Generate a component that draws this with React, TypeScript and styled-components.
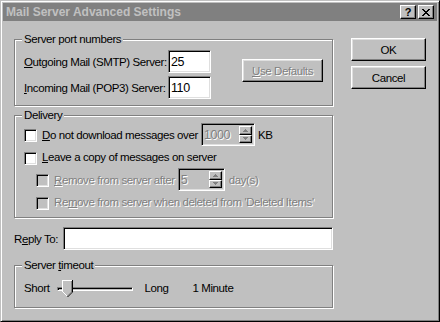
import styled, { createGlobalStyle } from 'styled-components';

const FACE = '#c0c0c0';
const SHADOW = '#808080';
const LIGHT = '#dfdfdf';
const FONT = `"Liberation Sans", Arial, sans-serif`;

const GlobalStyle = createGlobalStyle`
  html, body {
    margin: 0;
    padding: 0;
    background: ${FACE};
  }
  body {
    font-family: ${FONT};
    font-size: 11.5px;
    letter-spacing: -0.4px;
    color: #000;
  }
`;

const Window = styled.div`
  box-sizing: border-box;
  width: 440px;
  height: 322px;
  padding: 2px;
  display: flex;
  flex-direction: column;
  background: ${FACE};
  border: 1px solid;
  border-color: ${FACE} #000 #000 ${FACE};
  box-shadow: inset 1px 1px 0 #fff, inset -1px -1px 0 ${SHADOW};
`;

const TitleBar = styled.div`
  display: flex;
  align-items: center;
  height: 18px;
  padding: 0 3px 0 3px;
  background: ${SHADOW};
`;

const Title = styled.span`
  flex: 1;
  font-weight: 700;
  font-size: 12px;
  letter-spacing: 0;
  color: ${FACE};
  white-space: nowrap;
`;

const TitleButton = styled.div`
  box-sizing: border-box;
  display: flex;
  align-items: center;
  justify-content: center;
  width: 16px;
  height: 14px;
  margin-left: 2px;
  background: ${FACE};
  border: 1px solid;
  border-color: #fff #000 #000 #fff;
  box-shadow: inset -1px -1px 0 ${SHADOW};
  font-weight: 700;
  font-size: 11px;
  letter-spacing: 0;
  line-height: 1;
`;

const Body = styled.div`
  display: flex;
  padding: 17px 0 0 11px;
`;

const Main = styled.div`
  display: flex;
  flex-direction: column;
  width: 320px;
  padding-top: 1px;
`;

const Side = styled.div`
  display: flex;
  flex-direction: column;
  gap: 5px;
  margin-left: 17px;
`;

const Group = styled.div<{ $height: number; $top?: number }>`
  position: relative;
  box-sizing: border-box;
  width: 319px;
  height: ${(p) => p.$height}px;
  margin-top: ${(p) => p.$top ?? 0}px;
  border: 1px solid ${SHADOW};
  box-shadow: 1px 1px 0 #fff, inset 1px 1px 0 #fff;
`;

const Legend = styled.span`
  position: absolute;
  top: -8px;
  left: 7px;
  padding: 0 2px;
  line-height: 15px;
  background: ${FACE};
  white-space: nowrap;
`;

const GroupInner = styled.div<{ $pad: string }>`
  padding: ${(p) => p.$pad};
`;

const PortLayout = styled.div`
  display: flex;
  align-items: flex-start;
`;

const PortGrid = styled.div`
  display: grid;
  grid-template-columns: 144px 43px;
  row-gap: 3px;
  align-items: center;
`;

const Text = styled.span<{ $disabled?: boolean }>`
  white-space: nowrap;
  color: ${(p) => (p.$disabled ? SHADOW : '#000')};
  text-shadow: ${(p) => (p.$disabled ? '1px 1px 0 #fff' : 'none')};
`;

const TextBox = styled.div<{ $width: number; $disabled?: boolean }>`
  box-sizing: border-box;
  display: flex;
  align-items: center;
  width: ${(p) => p.$width}px;
  height: 23px;
  padding-left: 2px;
  font-size: 12.5px;
  background: ${(p) => (p.$disabled ? FACE : '#fff')};
  border: 1px solid;
  border-color: ${SHADOW} #fff #fff ${SHADOW};
  box-shadow: inset 1px 1px 0 #000, inset -1px -1px 0 ${LIGHT};
`;

const Button = styled.div<{ $width?: number; $disabled?: boolean }>`
  box-sizing: border-box;
  display: flex;
  align-items: center;
  justify-content: center;
  width: ${(p) => p.$width ?? 75}px;
  height: 23px;
  background: ${FACE};
  border: 1px solid;
  border-color: #fff #000 #000 #fff;
  box-shadow: inset -1px -1px 0 ${SHADOW}, inset 1px 1px 0 ${LIGHT};
  color: ${(p) => (p.$disabled ? SHADOW : '#000')};
  text-shadow: ${(p) => (p.$disabled ? '1px 1px 0 #fff' : 'none')};
`;

const DefaultsButton = styled(Button)`
  margin: 9px 0 0 31px;
`;

const CheckRow = styled.div<{ $height: number; $indent?: number }>`
  display: flex;
  align-items: center;
  height: ${(p) => p.$height}px;
  padding-left: ${(p) => p.$indent ?? 0}px;
`;

const CheckBox = styled.div<{ $disabled?: boolean }>`
  box-sizing: border-box;
  flex: none;
  width: 13px;
  height: 13px;
  margin: 2px 5px 0 0;
  background: ${(p) => (p.$disabled ? FACE : '#fff')};
  border: 1px solid;
  border-color: ${SHADOW} #fff #fff ${SHADOW};
  box-shadow: inset 1px 1px 0 #000, inset -1px -1px 0 ${LIGHT};
`;

const SpinBox = styled(TextBox)<{ $gap: number }>`
  margin-left: ${(p) => p.$gap}px;
  padding-right: 2px;
  color: ${SHADOW};
  text-shadow: 1px 1px 0 #fff;
`;

const SpinValue = styled.span`
  flex: 1;
`;

const SpinButtons = styled.div`
  display: flex;
  flex-direction: column;
  align-self: stretch;
  padding: 2px 0;
`;

const SpinButton = styled.div`
  box-sizing: border-box;
  flex: 1;
  display: flex;
  align-items: center;
  justify-content: center;
  width: 13px;
  background: ${FACE};
  border: 1px solid;
  border-color: #fff #000 #000 #fff;
  box-shadow: inset -1px -1px 0 ${SHADOW};
`;

const After = styled(Text)<{ $gap: number }>`
  margin-left: ${(p) => p.$gap}px;
`;

const ReplyRow = styled.div`
  display: flex;
  align-items: center;
  justify-content: space-between;
  width: 319px;
  margin-top: 9px;
`;

const TimeoutRow = styled.div`
  display: flex;
  align-items: center;
  height: 22px;
`;

const Slider = styled.div`
  position: relative;
  display: flex;
  align-items: center;
  width: 80px;
  height: 22px;
  margin: 0 10px 0 5px;
`;

const Track = styled.div`
  box-sizing: border-box;
  flex: 1;
  height: 4px;
  margin: 1px 2px 0;
  border: 1px solid;
  border-color: ${SHADOW} #fff #fff ${SHADOW};
  box-shadow: inset 1px 1px 0 #000;
`;

const Thumb = styled.svg`
  position: absolute;
  left: 7px;
  top: 3px;
`;

const U = styled.span`
  text-decoration: underline;
`;

const Arrow = ({ up }: { up?: boolean }) => (
  <svg width="5" height="3" viewBox="0 0 5 3">
    <path d={up ? 'M2 0h1v1h1v1h1v1H0V2h1V1h1z' : 'M0 0h5v1H4v1H3v1H2V2H1V1H0z'} fill={SHADOW} />
  </svg>
);

const Spin = ({ value, width, gap }: { value: string; width: number; gap: number }) => (
  <SpinBox $width={width} $gap={gap} $disabled>
    <SpinValue>{value}</SpinValue>
    <SpinButtons>
      <SpinButton>
        <Arrow up />
      </SpinButton>
      <SpinButton>
        <Arrow />
      </SpinButton>
    </SpinButtons>
  </SpinBox>
);

const App = () => (
  <>
    <GlobalStyle />
    <Window>
      <TitleBar>
        <Title>Mail Server Advanced Settings</Title>
        <TitleButton>?</TitleButton>
        <TitleButton>
          <svg width="8" height="7" viewBox="0 0 8 7">
            <path d="M0 0h2v1h1v1h2V1h1V0h2v1H7v1H6v1H5v1h1v1h1v1h1v1H6V6H5V5H3v1H2v1H0V6h1V5h1V4h1V3H2V2H1V1H0z" fill="#000" />
          </svg>
        </TitleButton>
      </TitleBar>

      <Body>
        <Main>
          <Group $height={67}>
            <Legend>Server port numbers</Legend>
            <GroupInner $pad="10px 0 0 9px">
              <PortLayout>
                <PortGrid>
                  <Text>
                    <U>O</U>utgoing Mail (SMTP) Server:
                  </Text>
                  <TextBox $width={43}>25</TextBox>
                  <Text>
                    <U>I</U>ncoming Mail (POP3) Server:
                  </Text>
                  <TextBox $width={43}>110</TextBox>
                </PortGrid>
                <DefaultsButton $width={81} $disabled>
                  <U>U</U>se Defaults
                </DefaultsButton>
              </PortLayout>
            </GroupInner>
          </Group>

          <Group $height={103} $top={9}>
            <Legend>Delivery</Legend>
            <GroupInner $pad="7px 0 0 9px">
              <CheckRow $height={23}>
                <CheckBox />
                <Text>
                  <U>D</U>o not download messages over
                </Text>
                <Spin value="1000" width={54} gap={3} />
                <After $gap={3}>KB</After>
              </CheckRow>
              <CheckRow $height={22}>
                <CheckBox />
                <Text>
                  <U>L</U>eave a copy of messages on server
                </Text>
              </CheckRow>
              <CheckRow $height={23} $indent={12}>
                <CheckBox $disabled />
                <Text $disabled>
                  <U>R</U>emove from server after
                </Text>
                <Spin value="5" width={47} gap={3} />
                <After $gap={4} $disabled>
                  day(s)
                </After>
              </CheckRow>
              <CheckRow $height={22} $indent={12}>
                <CheckBox $disabled />
                <Text $disabled>
                  Re<U>m</U>ove from server when deleted from 'Deleted Items'
                </Text>
              </CheckRow>
            </GroupInner>
          </Group>

          <ReplyRow>
            <Text>
              R<U>e</U>ply To:
            </Text>
            <TextBox $width={270} />
          </ReplyRow>

          <Group $height={43} $top={15}>
            <Legend>
              Server <U>t</U>imeout
            </Legend>
            <GroupInner $pad="11px 0 0 9px">
              <TimeoutRow>
                <Text>Short</Text>
                <Slider>
                  <Track />
                  <Thumb width="11" height="17" viewBox="0 0 11 17">
                    <path d="M0 0h11v12l-5 5h-1l-5-5z" fill={FACE} />
                    <path d="M0 0h10v1H1v11H0z" fill="#fff" />
                    <path d="M1 12l4 4" stroke="#fff" strokeWidth="1" />
                    <path d="M10 0h1v12h-1z" fill="#000" />
                    <path d="M9 1h1v11H9z" fill={SHADOW} />
                    <path d="M10.5 12l-5 5" stroke="#000" strokeWidth="1" />
                    <path d="M9.5 12l-4 4" stroke={SHADOW} strokeWidth="1" />
                  </Thumb>
                </Slider>
                <Text>Long</Text>
                <After $gap={24}>1 Minute</After>
              </TimeoutRow>
            </GroupInner>
          </Group>
        </Main>

        <Side>
          <Button>OK</Button>
          <Button>Cancel</Button>
        </Side>
      </Body>
    </Window>
  </>
);

export default App;
